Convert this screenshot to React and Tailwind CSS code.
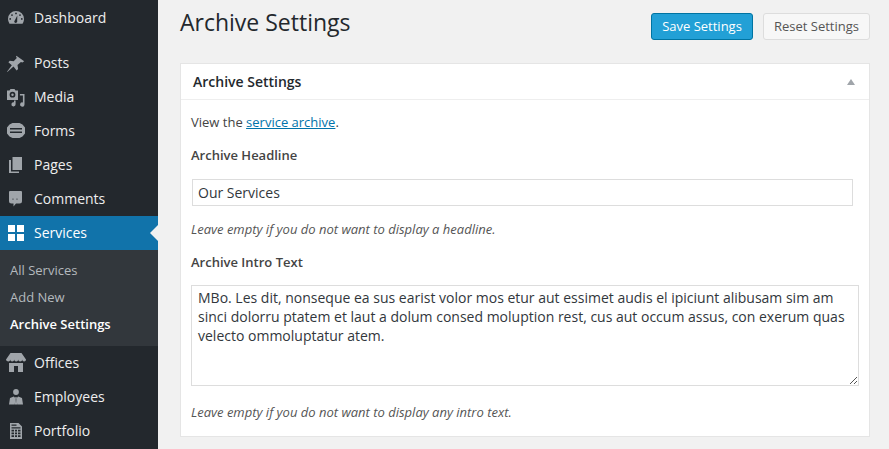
const font = { fontFamily: '"Open Sans", sans-serif' };

const DashboardIcon = () => (
    <svg width="20" height="20" viewBox="0 0 20 20" fill="currentColor">
        <path fillRule="evenodd" d="M10 3a8 8 0 0 1 8 8c0 1.800-.6 3.400-1.500 4.700H3.500A8 8 0 0 1 2 11a8 8 0 0 1 8-8zM10 4.500a.9.9 0 1 0 0 1.800.9.9 0 0 0 0-1.800zM6 6.200a.9.9 0 1 0 0 1.800.9.9 0 0 0 0-1.800zM14 6.200a.9.9 0 1 0 0 1.800.9.9 0 0 0 0-1.800zM4.200 10a.9.9 0 1 0 0 1.800.9.9 0 0 0 0-1.800zM15.800 10a.9.9 0 1 0 0 1.800.9.9 0 0 0 0-1.800zM11.300 7.500l-2.400 4.700a1.500 1.500 0 1 0 2.300.8z" />
    </svg>
);

const PostsIcon = () => (
    <svg width="20" height="20" viewBox="0 0 20 20" fill="currentColor">
        <path d="M10.400 2.800l7.800 5.400-1.800 1.300-1.500-.6-3.400 3.200.6 3.800-1.500 1.500-3.100-3.800L1.300 19l-.3-.3 4.800-6.400-3.400-3 1.400-1.500 3.900.5 3.100-3.300-.8-1.400z" />
    </svg>
);

const MediaIcon = () => (
    <svg width="20" height="20" viewBox="0 0 20 20" fill="currentColor">
        <path fillRule="evenodd" d="M4.500 2h4l1 1.500h2.500V13H1V3.500h2.500zM6.500 4.800a2.900 2.900 0 1 0 0 5.800 2.900 2.900 0 0 0 0-5.800z" />
        <circle cx="6.500" cy="7.700" r="1.200" />
        <path d="M18.500 7v10.500a2.200 2.200 0 1 1-1.600-2.100V8.600h-3V7z" />
        <path d="M8 13.500h1.600v3.800a2.100 2.100 0 1 1-1.600-2z" />
    </svg>
);

const FormsIcon = () => (
    <svg width="20" height="20" viewBox="0 0 20 20" fill="currentColor">
        <path fillRule="evenodd" d="M6.500 2h7l3 1.500 2.500 3v6l-2.500 3-3 1.500h-7l-3-1.500L1 12.500v-6l2.500-3zM4 7v1.500h12V7zM4 10.500V12h12v-1.500z" />
    </svg>
);

const PagesIcon = () => (
    <svg width="20" height="20" viewBox="0 0 20 20" fill="currentColor">
        <path d="M6.500 2H16v13H6.500z" />
        <path d="M5 5v11.500h8V18H3V5z" />
    </svg>
);

const CommentsIcon = () => (
    <svg width="20" height="20" viewBox="0 0 20 20" fill="currentColor">
        <path fillRule="evenodd" d="M4 2h11a1 1 0 0 1 1 1v9a2.500 2.500 0 0 1-2.500 2.500H10l-2.500 3V14.500H5.500A2.500 2.500 0 0 1 3 12V3a1 1 0 0 1 1-1zM7 9.500a.6.6 0 1 0 0 1.200.6.6 0 0 0 0-1.200zM11 9.500a.6.6 0 1 0 0 1.200.6.6 0 0 0 0-1.200z" />
    </svg>
);

const ServicesIcon = () => (
    <svg width="20" height="20" viewBox="0 0 20 20" fill="currentColor">
        <path d="M2 2h7v7H2zM11 2h7v7h-7zM2 11h7v7H2zM11 11h7v7h-7z" />
    </svg>
);

const OfficesIcon = () => (
    <svg width="20" height="20" viewBox="0 0 20 20" fill="currentColor">
        <path d="M4.500 0h11l4.500 6.500c0 1.200-.8 2-1.900 2s-1.900-.8-1.900-2c0 1.200-.9 2-2 2s-2-.8-2-2c0 1.200-.9 2-2 2s-2-.8-2-2c0 1.200-.9 2-2 2s-2-.8-2-2c0 1.200-.8 2-1.800 2S0 7.700 0 6.500z" />
        <path fillRule="evenodd" d="M3 10h14v9h-5v-6H8v6H3z" />
    </svg>
);

const EmployeesIcon = () => (
    <svg width="20" height="20" viewBox="0 0 20 20" fill="currentColor">
        <circle cx="10" cy="5" r="2.900" />
        <path d="M7.800 9.500 4 11l-1 6.500h5.800l.6-6-1-1.500zM12.200 9.500 16 11l1 6.500h-5.800l-.6-6 1-1.500z" />
        <path d="M9.400 10h1.200l.2 1.200-.2 1 .5 5.300H8.900l.5-5.300-.2-1z" />
    </svg>
);

const PortfolioIcon = () => (
    <svg width="20" height="20" viewBox="0 0 20 20" fill="currentColor">
        <path fillRule="evenodd" d="M4 2h8.500L16 5.500V18H4zM5.500 3.500v1.300h5V3.500zM5.500 6.200v1.300h9V6.200zM5.500 8.700v1.800h2.500V8.700zM9 8.700v1.800h2V8.700zM12 8.700v1.800h2.500V8.700zM5.500 11.500v1.800h2.500v-1.800zM9 11.500v1.800h2v-1.800zM12 11.500v1.800h2.500v-1.800zM5.500 14.300v1.800h2.500v-1.800zM9 14.300v1.800h2v-1.800zM12 14.300v1.800h2.500v-1.800z" />
    </svg>
);

const MenuItem = ({ icon: Icon, label, active }) => (
    <div className={`relative flex items-center h-[34px] ${active ? 'bg-[#1173aa] text-white' : 'text-[#eeeeee]'}`}>
        <span className={`w-[34px] pl-[6px] flex items-center shrink-0 ${active ? 'text-white' : 'text-[#a0a5aa]'}`}>
            <Icon />
        </span>
        <span className="text-[14px] leading-[18px]">{label}</span>
        {active && (
            <span className="absolute right-0 top-[9px] border-y-[8px] border-r-[8px] border-y-transparent border-r-[#f1f1f1]" />
        )}
    </div>
);

const App = () => {
    return (
        <div className="flex w-[889px] h-[449px] overflow-hidden bg-[#f1f1f1] text-[#444444]" style={font}>
            {/* Sidebar */}
            <div className="w-[158px] h-full shrink-0 bg-[#23282d] pt-[1px]">
                <MenuItem icon={DashboardIcon} label="Dashboard" />
                <div className="h-[11px]" />
                <MenuItem icon={PostsIcon} label="Posts" />
                <MenuItem icon={MediaIcon} label="Media" />
                <MenuItem icon={FormsIcon} label="Forms" />
                <MenuItem icon={PagesIcon} label="Pages" />
                <MenuItem icon={CommentsIcon} label="Comments" />
                <MenuItem icon={ServicesIcon} label="Services" active />
                <div className="h-[96px] bg-[#32373c] pl-[10px] pt-[7px] text-[13px]">
                    <div className="h-[27px] leading-[27px] text-[#b4b9be]">All Services</div>
                    <div className="h-[27px] leading-[27px] text-[#b4b9be]">Add New</div>
                    <div className="h-[27px] leading-[27px] text-white font-semibold">Archive Settings</div>
                </div>
                <MenuItem icon={OfficesIcon} label="Offices" />
                <MenuItem icon={EmployeesIcon} label="Employees" />
                <MenuItem icon={PortfolioIcon} label="Portfolio" />
            </div>

            {/* Main */}
            <div className="flex-1 pl-[22px] pr-[19px]">
                <div className="flex items-start justify-between h-[63px]">
                    <h1 className="text-[23px] leading-[29px] text-[#23282d] mt-[8px]">Archive Settings</h1>
                    <div className="flex gap-[10px] mt-[13px]">
                        <button className="w-[102px] h-[27px] rounded-[3px] bg-[#22a0d6] border border-[#0074a2] text-white text-[13px] leading-[25px]">
                            Save Settings
                        </button>
                        <button className="w-[107px] h-[27px] rounded-[3px] bg-[#f7f7f7] border border-[#dddddd] text-[#555555] text-[13px] leading-[25px]">
                            Reset Settings
                        </button>
                    </div>
                </div>

                <div className="h-[374px] bg-white border border-[#e5e5e5] text-[13px]">
                    <div className="relative flex items-center h-[36px] pl-[12px] border-b border-[#eeeeee]">
                        <h2 className="text-[14px] font-semibold leading-[18px] text-[#23282d]">Archive Settings</h2>
                        <span className="absolute right-[14px] top-[15px] border-x-[4px] border-b-[6px] border-x-transparent border-b-[#a0a5aa]" />
                    </div>
                    <div className="px-[10px]">
                        <p className="mt-[13px] leading-[18px]">
                            View the <a href="#" className="text-[#0073aa] underline">service archive</a>.
                        </p>
                        <div className="mt-[15px] font-semibold leading-[18px]">Archive Headline</div>
                        <div className="mt-[15px] ml-[1px] w-[661px] h-[27px] border border-[#dddddd] pl-[5px] text-[14px] leading-[25px] text-[#32373c]">
                            Our Services
                        </div>
                        <p className="mt-[14px] text-[13px] italic leading-[18px] text-[#555555]">Leave empty if you do not want to display a headline.</p>
                        <div className="mt-[15px] font-semibold leading-[18px]">Archive Intro Text</div>
                        <div className="relative mt-[14px] w-[668px] h-[101px] border border-[#dddddd] px-[6px] pt-[2px] text-[14px] leading-[19px] text-[#32373c]">
                            MBo. Les dit, nonseque ea sus earist volor mos etur aut essimet audis el ipiciunt alibusam sim am sinci dolorru ptatem et laut a dolum consed moluption rest, cus aut occum assus, con exerum quas velecto ommoluptatur atem.
                            <svg className="absolute right-0 bottom-0" width="9" height="9" viewBox="0 0 9 9" stroke="#555555" fill="none">
                                <path d="M1 8 8 1M5 8 8 5" />
                            </svg>
                        </div>
                        <p className="mt-[17px] text-[13px] italic leading-[18px] text-[#555555]">Leave empty if you do not want to display any intro text.</p>
                    </div>
                </div>
            </div>
        </div>
    );
};

export default App;
